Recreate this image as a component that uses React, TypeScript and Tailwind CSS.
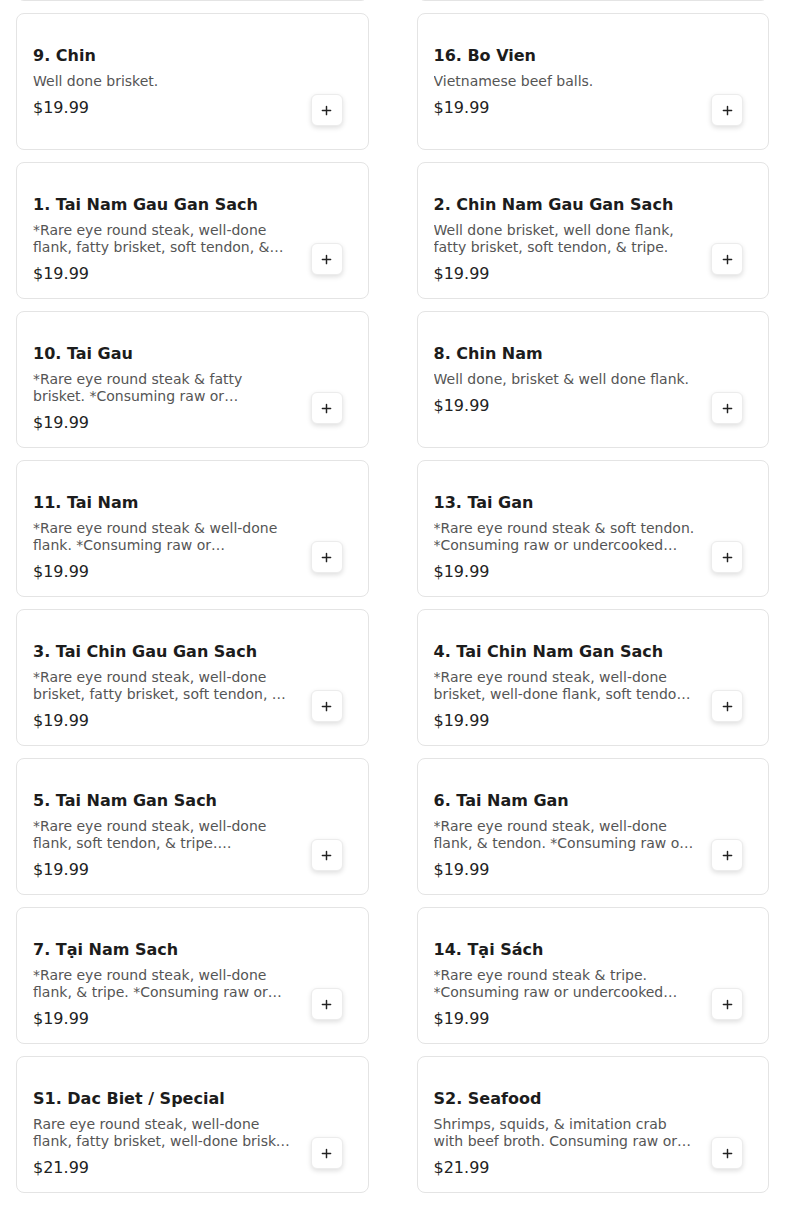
import React from 'react';

type Item = { name: string; desc: string; price: string };

const RAW = ' *Consuming raw or undercooked meats, poultry, seafood, shellfish, or eggs may increase your risk of foodborne illness.';

const items: Item[] = [
  { name: '15. Tai Chin', desc: '*Rare eye round steak & well done brisket.' + RAW, price: '$19.99' },
  { name: '12. Tai', desc: '*Rare eye round steak.' + RAW, price: '$19.99' },
  { name: '9. Chin', desc: 'Well done brisket.', price: '$19.99' },
  { name: '16. Bo Vien', desc: 'Vietnamese beef balls.', price: '$19.99' },
  { name: '1. Tai Nam Gau Gan Sach', desc: '*Rare eye round steak, well-done flank, fatty brisket, soft tendon, & tripe.' + RAW, price: '$19.99' },
  { name: '2. Chin Nam Gau Gan Sach', desc: 'Well done brisket, well done flank, fatty brisket, soft tendon, & tripe.', price: '$19.99' },
  { name: '10. Tai Gau', desc: '*Rare eye round steak & fatty brisket.' + RAW, price: '$19.99' },
  { name: '8. Chin Nam', desc: 'Well done, brisket & well done flank.', price: '$19.99' },
  { name: '11. Tai Nam', desc: '*Rare eye round steak & well-done flank.' + RAW, price: '$19.99' },
  { name: '13. Tai Gan', desc: '*Rare eye round steak & soft tendon.' + RAW, price: '$19.99' },
  { name: '3. Tai Chin Gau Gan Sach', desc: '*Rare eye round steak, well-done brisket, fatty brisket, soft tendon, & tripe.' + RAW, price: '$19.99' },
  { name: '4. Tai Chin Nam Gan Sach', desc: '*Rare eye round steak, well-done brisket, well-done flank, soft tendon, & tripe.' + RAW, price: '$19.99' },
  { name: '5. Tai Nam Gan Sach', desc: '*Rare eye round steak, well-done flank, soft tendon, & tripe.' + RAW, price: '$19.99' },
  { name: '6. Tai Nam Gan', desc: '*Rare eye round steak, well-done flank, & tendon.' + RAW, price: '$19.99' },
  { name: '7. Tại Nam Sach', desc: '*Rare eye round steak, well-done flank, & tripe.' + RAW, price: '$19.99' },
  { name: '14. Tại Sách', desc: '*Rare eye round steak & tripe.' + RAW, price: '$19.99' },
  { name: 'S1. Dac Biet / Special', desc: 'Rare eye round steak, well-done flank, fatty brisket, well-done brisket, soft tendon, tripe & beef balls. Consuming raw or undercooked meats may increase your risk of foodborne illness.', price: '$21.99' },
  { name: 'S2. Seafood', desc: 'Shrimps, squids, & imitation crab with beef broth. Consuming raw or undercooked seafood may increase your risk of foodborne illness.', price: '$21.99' },
];

function PlusIcon() {
  return (
    <svg width="11" height="11" viewBox="0 0 12 12" fill="none" stroke="#222" strokeWidth="1.6" strokeLinecap="round">
      <path d="M6 1.5v9M1.5 6h9" />
    </svg>
  );
}

function MenuCard({ item }: { item: Item }) {
  return (
    <div className="flex h-[137px] rounded-lg border border-[#e4e4e4] bg-white pl-4 pr-[25px]">
      <div className="min-w-0 flex-1 pt-[30px]">
        <h3 className="text-base leading-6 font-bold text-[#1c1c1c]">{item.name}</h3>
        <p className="mt-[5px] line-clamp-2 text-sm leading-[17px] text-[#555555]">{item.desc}</p>
        <p className="mt-[6px] text-base leading-6 text-[#222222]">{item.price}</p>
      </div>
      <div className="ml-4 flex items-end pb-[23px]">
        <button
          type="button"
          className="flex h-8 w-8 items-center justify-center rounded-md border border-[#ececec] bg-white shadow-[0_2px_5px_rgba(0,0,0,0.13)]"
        >
          <PlusIcon />
        </button>
      </div>
    </div>
  );
}

export default function App() {
  return (
    <div className="h-[1217px] overflow-hidden bg-white font-['DejaVu_Sans',sans-serif]">
      <div className="-mt-[136px] grid grid-cols-2 gap-x-12 gap-y-3 px-4">
        {items.map((item) => (
          <MenuCard key={item.name} item={item} />
        ))}
      </div>
    </div>
  );
}
